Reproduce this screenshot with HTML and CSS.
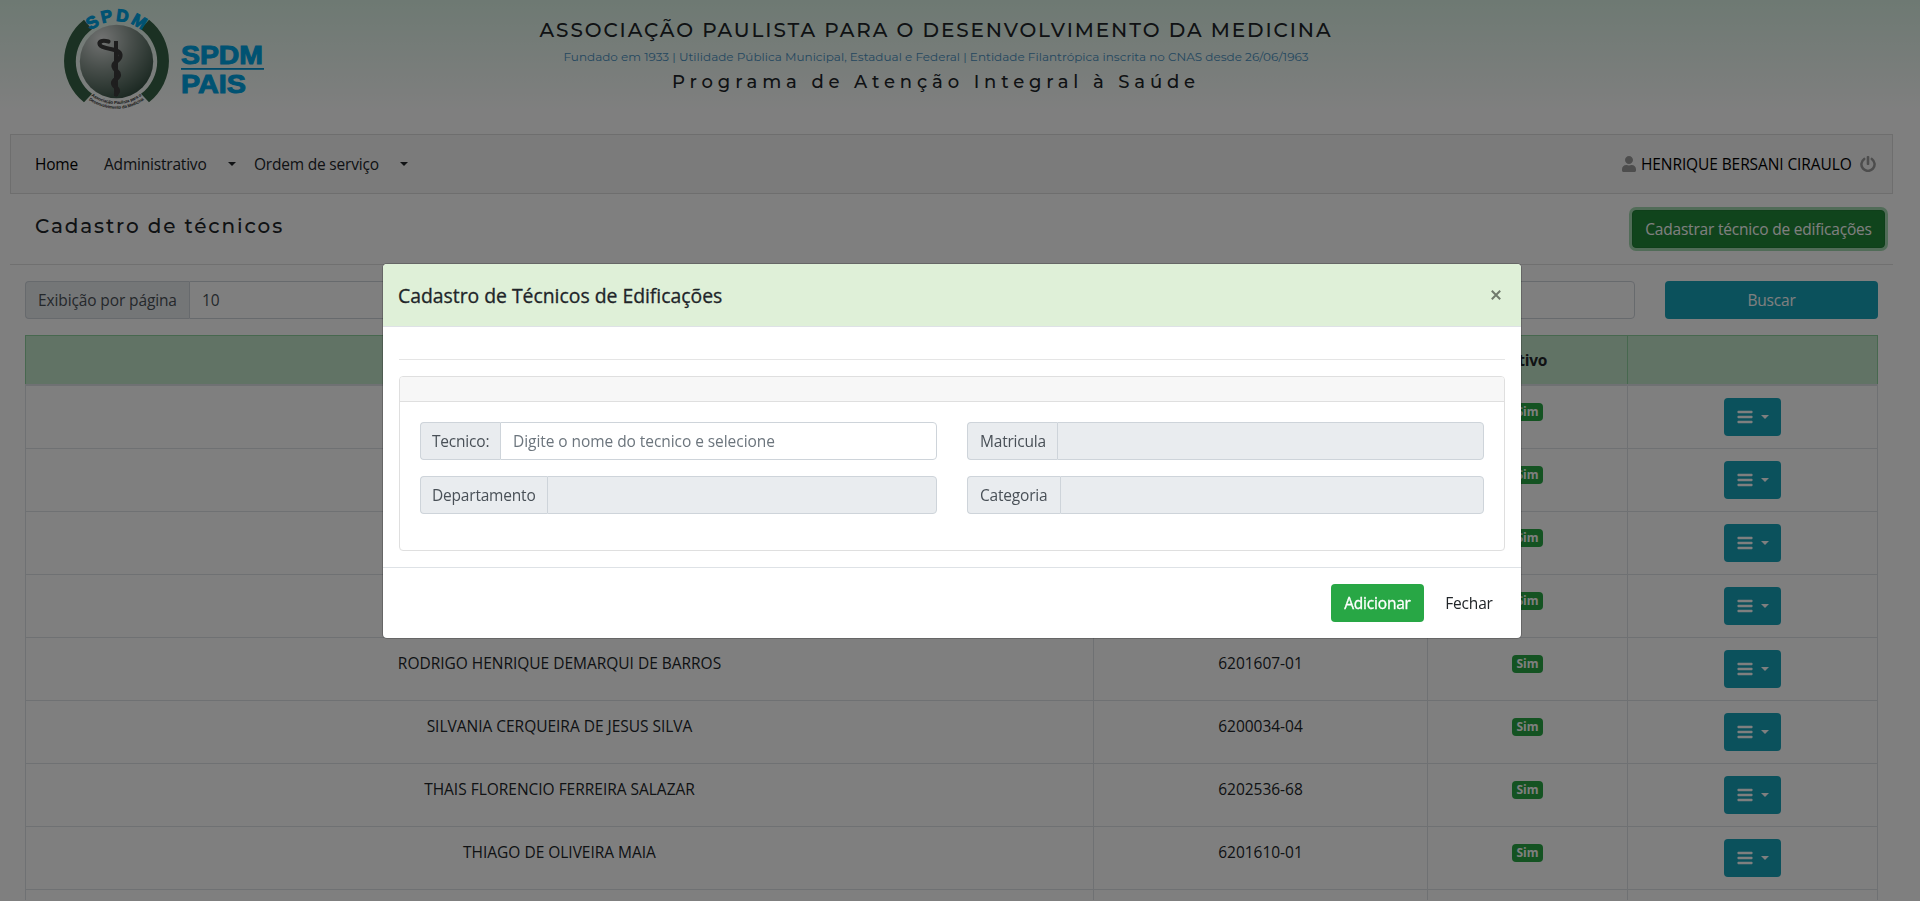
FILE: index.html
```html
<!DOCTYPE html>
<html lang="pt-BR">
<head>
<meta charset="utf-8">
<title>Cadastro de técnicos</title>
<link rel="stylesheet" href="styles.css">
</head>
<body>
<svg class="sprite" aria-hidden="true">
  <symbol id="i-bars" viewBox="0 0 16 16"><rect x="0.500" y="1.700" width="15" height="2.600" rx="0.700"/><rect x="0.500" y="6.700" width="15" height="2.600" rx="0.700"/><rect x="0.500" y="11.700" width="15" height="2.600" rx="0.700"/></symbol>
</svg>
<header class="masthead">
  <svg class="logo" width="210" height="120" viewBox="60 0 210 120">
    <defs>
      <radialGradient id="globe" cx="0.3" cy="0.2" r="0.9">
        <stop offset="0" stop-color="#e4e6e5"/>
        <stop offset="0.45" stop-color="#8f9c95"/>
        <stop offset="1" stop-color="#2f4b3d"/>
      </radialGradient>
      <path id="arcTop" d="M76.200 61.500 A40.300 40.300 0 0 1 156.800 61.500"/>
      <path id="arcBottomA" d="M74 61.500 A42.500 42.500 0 0 0 159 61.500"/>
      <path id="arcBottomB" d="M69.200 61.500 A47.300 47.300 0 0 0 163.800 61.500"/>
    </defs>
    <path class="ring" d="M84 19.700 A52.700 52.700 0 0 0 84 102.300 L92 93.800 A40.300 40.300 0 0 1 92 29.200 Z"/>
    <path class="ring" d="M149 19.700 A52.700 52.700 0 0 1 149 102.300 L141 93.800 A40.300 40.300 0 0 0 141 29.200 Z"/>
    <circle cx="116.500" cy="61.500" r="36.700" fill="url(#globe)"/>
    <path d="M114 41h4v55h-4z" fill="#3c3c3c"/>
    <path class="snake" d="M108.500 41.500 C101 39.500 98.500 42 100 45 C103 50 120 47.500 120.500 55 C121 62 112.500 61 113.500 66.500 C114.500 71 119 70.500 119 75 C119 79 113 79 113 83 C113 87.500 118.500 87 118 91.500 L116 94.500"/>
    <text class="logo-arc"><textPath href="#arcTop" startOffset="50%" text-anchor="middle" textLength="56">SPDM</textPath></text>
    <text class="logo-tiny"><textPath href="#arcBottomA" startOffset="50%" text-anchor="middle" textLength="54">Associação Paulista para o</textPath></text>
    <text class="logo-tiny"><textPath href="#arcBottomB" startOffset="50%" text-anchor="middle" textLength="59">Desenvolvimento da Medicina</textPath></text>
    <text class="logo-word" x="181" y="64.300" textLength="82" lengthAdjust="spacingAndGlyphs">SPDM</text>
    <rect x="181" y="68" width="83" height="1.800" fill="#0092d0"/>
    <text class="logo-word" x="181" y="92.500" textLength="65" lengthAdjust="spacingAndGlyphs">PAIS</text>
  </svg>
  <div class="org">
    <div class="org-name">ASSOCIAÇÃO PAULISTA PARA O DESENVOLVIMENTO DA MEDICINA</div>
    <div class="org-info">Fundado em 1933 | Utilidade Pública Municipal, Estadual e Federal | Entidade Filantrópica inscrita no CNAS desde 26/06/1963</div>
    <div class="org-program">Programa de Atenção Integral à Saúde</div>
  </div>
</header>

<main class="page">
  <nav class="navbar">
    <a class="nav-home">Home</a>
    <a class="nav-item nav-admin">Administrativo</a><i class="caret"></i>
    <a class="nav-item nav-order">Ordem de serviço</a><i class="caret"></i>
    <div class="user">
      <svg width="14" height="16" viewBox="0 0 448 512"><path d="M224 256c70.700 0 128-57.300 128-128S294.700 0 224 0 96 57.300 96 128s57.300 128 128 128zm89.600 32h-16.700c-22.200 10.200-46.900 16-72.900 16s-50.600-5.800-72.900-16h-16.700C60.200 288 0 348.200 0 422.400V464c0 26.500 21.500 48 48 48h352c26.500 0 48-21.500 48-48v-41.600c0-74.200-60.200-134.400-134.400-134.400z"/></svg>
      <span class="user-name">HENRIQUE BERSANI CIRAULO</span>
      <svg width="16" height="16" viewBox="0 0 16 16"><path d="M4.200 2.900 A6.600 6.600 0 1 0 11.800 2.900" fill="none" stroke="#9b9b9b" stroke-width="2.500" stroke-linecap="round"/><rect x="6.700" y="0" width="2.600" height="9" rx="0.800"/></svg>
    </div>
  </nav>

  <div class="title-row">
    <h1 class="title">Cadastro de técnicos</h1>
    <button class="btn btn-create">Cadastrar técnico de edificações</button>
  </div>

  <div class="filters">
    <div class="group group-size"><span class="addon addon-size">Exibição por página</span><span class="field">10</span></div>
    <div class="group group-search"><span class="field"></span></div>
    <button class="btn btn-search">Buscar</button>
  </div>

  <table class="table">
    <colgroup><col class="c-name"><col class="c-code"><col class="c-active"><col class="c-menu"></colgroup>
    <thead><tr><th></th><th></th><th>Ativo</th><th></th></tr></thead>
    <tbody>
      <tr><td></td><td></td><td><span class="badge">Sim</span></td><td><button class="btn btn-menu"><svg width="16" height="16"><use href="#i-bars"/></svg><i class="caret"></i></button></td></tr>
      <tr><td></td><td></td><td><span class="badge">Sim</span></td><td><button class="btn btn-menu"><svg width="16" height="16"><use href="#i-bars"/></svg><i class="caret"></i></button></td></tr>
      <tr><td></td><td></td><td><span class="badge">Sim</span></td><td><button class="btn btn-menu"><svg width="16" height="16"><use href="#i-bars"/></svg><i class="caret"></i></button></td></tr>
      <tr><td></td><td></td><td><span class="badge">Sim</span></td><td><button class="btn btn-menu"><svg width="16" height="16"><use href="#i-bars"/></svg><i class="caret"></i></button></td></tr>
      <tr><td>RODRIGO HENRIQUE DEMARQUI DE BARROS</td><td>6201607-01</td><td><span class="badge">Sim</span></td><td><button class="btn btn-menu"><svg width="16" height="16"><use href="#i-bars"/></svg><i class="caret"></i></button></td></tr>
      <tr><td>SILVANIA CERQUEIRA DE JESUS SILVA</td><td>6200034-04</td><td><span class="badge">Sim</span></td><td><button class="btn btn-menu"><svg width="16" height="16"><use href="#i-bars"/></svg><i class="caret"></i></button></td></tr>
      <tr><td>THAIS FLORENCIO FERREIRA SALAZAR</td><td>6202536-68</td><td><span class="badge">Sim</span></td><td><button class="btn btn-menu"><svg width="16" height="16"><use href="#i-bars"/></svg><i class="caret"></i></button></td></tr>
      <tr><td>THIAGO DE OLIVEIRA MAIA</td><td>6201610-01</td><td><span class="badge">Sim</span></td><td><button class="btn btn-menu"><svg width="16" height="16"><use href="#i-bars"/></svg><i class="caret"></i></button></td></tr>
      <tr class="row-cut"><td></td><td></td><td></td><td></td></tr>
    </tbody>
  </table>
</main>

<div class="backdrop">
  <section class="modal">
    <header class="modal-head">
      <h2 class="modal-title">Cadastro de Técnicos de Edificações</h2>
      <svg class="close" width="10" height="10" viewBox="0 0 10 10"><path d="M0.800 0.800 9.200 9.200M9.200 0.800 0.800 9.200"/></svg>
    </header>
    <div class="modal-body">
      <hr class="rule">
      <div class="card">
        <div class="card-head"></div>
        <div class="card-body">
          <div class="group"><span class="addon addon-tech">Tecnico:</span><span class="field placeholder">Digite o nome do tecnico e selecione</span></div>
          <div class="group"><span class="addon addon-reg">Matricula</span><span class="field off"></span></div>
          <div class="group"><span class="addon addon-dept">Departamento</span><span class="field off"></span></div>
          <div class="group"><span class="addon addon-cat">Categoria</span><span class="field off"></span></div>
        </div>
      </div>
    </div>
    <footer class="modal-foot">
      <button class="btn btn-add">Adicionar</button>
      <button class="btn btn-close">Fechar</button>
    </footer>
  </section>
</div>
</body>
</html>
```
FILE: styles.css
```css
* { box-sizing: border-box; }
html, body { height: 901px; overflow: hidden; }
body {
  margin: 0;
  background: #fff;
  color: #212529;
  font: 15.5px/24px "Open Sans", "Noto Sans", sans-serif;
  letter-spacing: -0.2px;
}
.sprite { position: absolute; width: 0; height: 0; }

/* Masthead */
.masthead {
  display: flex;
  height: 134px;
  padding-left: 60px;
  background: linear-gradient(#dcf3e6, #fff 112px);
}
.logo { flex: none; }
.ring { fill: #376346; }
.snake { fill: none; stroke: #3c3c3c; stroke-width: 4.2; stroke-linecap: round; }
.logo-arc { font: bold 17px "Liberation Sans", Arial, sans-serif; fill: #00a4e4; stroke: #00a4e4; stroke-width: 1; letter-spacing: 0; }
.logo-tiny { font: bold 4.4px "Liberation Sans", Arial, sans-serif; fill: #333; letter-spacing: 0; }
.logo-word { font: bold 26px "Liberation Sans", Arial, sans-serif; fill: #00a4e4; stroke: #00a4e4; stroke-width: 1; letter-spacing: 0; }
.org {
  width: 1332px;
  padding-top: 17px;
  text-align: center;
  font-family: Montserrat, Inter, sans-serif;
  white-space: nowrap;
}
.org-name { font-size: 20px; font-weight: 500; line-height: 27px; letter-spacing: 1.9px; }
.org-info { font-size: 12px; line-height: 26px; letter-spacing: 0; color: #4a90c0; }
.org-program { font-size: 18px; font-weight: 500; line-height: 25px; letter-spacing: 4.85px; }

/* Page frame */
.page { width: 1903px; padding: 0 10px; }
.navbar {
  display: flex;
  align-items: center;
  height: 60px;
  padding: 0 16px 0 24px;
  background: #f7f7f7;
  border: 1px solid #dcdcdc;
  white-space: nowrap;
}
.nav-home { width: 69px; color: #000; }
.nav-admin { width: 124px; }
.nav-order { width: 146px; margin-left: 18px; }
.caret {
  display: inline-block;
  border-top: 4.800px solid currentColor;
  border-left: 4.800px solid transparent;
  border-right: 4.800px solid transparent;
}
.user { display: flex; align-items: center; margin-left: auto; color: #000; letter-spacing: -0.1px; }
.user svg { fill: #9b9b9b; }
.user-name { width: 211px; margin: 0 8px 0 5px; }

.title-row {
  display: flex;
  justify-content: space-between;
  align-items: flex-start;
  height: 71px;
  padding: 16px 8px 0 25px;
  border-bottom: 1px solid #e0e0e0;
}
.title { margin: 4px 0 0; font: 500 20px/24px Montserrat, Inter, sans-serif; letter-spacing: 1.85px; }

.btn {
  display: block;
  height: 38px;
  padding: 0;
  border: 0;
  border-radius: 4px;
  color: #fff;
  font: inherit;
  letter-spacing: inherit;
  text-align: center;
  white-space: nowrap;
}
.btn-create { width: 253px; background: #218838; border: 1px solid #1e7e34; box-shadow: 0 0 0 3px rgba(72, 180, 97, 0.5); }

.filters { display: flex; padding: 16px 15px; }
.group { display: flex; height: 38px; }
.group-size { width: 675px; }
.group-search { width: 905px; margin: 0 30px; }
.addon {
  flex: none;
  padding: 6px 0 0 12px;
  background: #e9ecef;
  border: 1px solid #ced4da;
  border-right: 0;
  border-radius: 4px 0 0 4px;
  color: #495057;
  white-space: nowrap;
}
.field {
  flex: 1;
  padding: 6px 12px 0;
  border: 1px solid #ced4da;
  border-radius: 0 4px 4px 0;
  color: #495057;
}
.off { background: #e9ecef; }
.placeholder { color: #6c757d; letter-spacing: -0.06px; }
.addon-size { width: 164px; letter-spacing: -0.12px; }
.btn-search { width: 213px; background: #17a2b8; }

/* Technicians table */
.table {
  width: 1852px;
  margin-left: 15px;
  table-layout: fixed;
  border-collapse: collapse;
  text-align: center;
}
.c-name { width: 1068px; }
.c-code { width: 334px; }
.c-active { width: 200px; }
.c-menu { width: 250px; }
.table th { height: 49px; padding: 0; background: #c3e6cb; border: 1px solid #8fd19e; border-bottom: 2px solid #dee2e6; font-weight: 700; }
.table td { height: 63px; padding: 13px 12px 12px; border: 1px solid #dee2e6; vertical-align: top; letter-spacing: -0.02px; }
.table .row-cut td { height: 11px; padding: 0; border-bottom: 0; }
.badge {
  display: block;
  width: 31px;
  height: 18px;
  margin: 4px auto 0;
  border-radius: 4px;
  background: #28a745;
  color: #fff;
  font-size: 12px;
  font-weight: 700;
  line-height: 18px;
}
.btn-menu { display: flex; align-items: center; justify-content: center; gap: 8px; width: 57px; margin: -1px auto 0; background: #17a2b8; }
.btn-menu svg { fill: #fff; }
.btn-menu .caret { border-width: 4.500px 4px 0; }

/* Dialog */
.backdrop { position: fixed; inset: 0; padding: 264px 0 0 383px; background: rgba(0, 0, 0, 0.5); }
.modal { width: 1138px; height: 374px; border-radius: 4px; background: #fff; box-shadow: 0 0 0 1px rgba(0, 0, 0, 0.2); }
.modal-head {
  display: flex;
  justify-content: space-between;
  align-items: center;
  height: 63px;
  padding: 0 20px 0 15px;
  background: #dff0d8;
  border-bottom: 1px solid #dee2e6;
  border-radius: 4px 4px 0 0;
}
.modal-title { margin: 2px 0 0; font-size: 19.4px; font-weight: 500; line-height: 30px; letter-spacing: -0.02px; -webkit-text-stroke: 0.300px #212529; }
.close { fill: none; stroke: #707a6c; stroke-width: 2; }
.modal-body { height: 240px; padding: 32px 16px 16px; }
.rule { height: 1px; margin: 0 0 16px; border: 0; background: #e5e5e5; }
.card { height: 175px; border: 1px solid #dfdfdf; border-radius: 4px; }
.card-head { height: 25px; background: #f7f7f7; border-bottom: 1px solid #dfdfdf; border-radius: 3px 3px 0 0; }
.card-body { display: grid; grid-template-columns: 517px 517px; gap: 16px 30px; padding: 20px; }
.addon-tech { width: 80px; padding-left: 11px; }
.addon-dept { width: 127px; padding-left: 11px; }
.addon-reg { width: 90px; }
.addon-cat { width: 93px; }
.modal-foot { display: flex; justify-content: flex-end; height: 71px; padding: 16px 16px 0; border-top: 1px solid #dee2e6; }
.btn-add { width: 93px; background: #28a745; -webkit-text-stroke: 0.300px #fff; }
.btn-close { width: 72px; margin-left: 9px; background: none; color: #212529; }
```
